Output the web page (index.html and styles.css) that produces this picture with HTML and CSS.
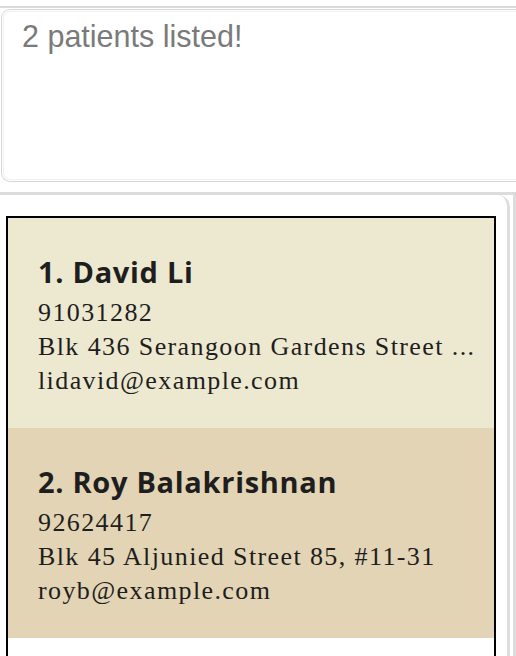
FILE: index.html
```html
<!DOCTYPE html>
<html>
<head>
<meta charset="utf-8">
<link rel="stylesheet" href="styles.css">
</head>
<body>
<div class="app">
  <div class="rule rule-top"></div>
  <div class="result-box">
    <div class="result-inner">2 patients listed!</div>
  </div>
  <div class="rule rule-mid"></div>
  <div class="list-area">
    <div class="list-panel">
      <div class="list">
        <div class="card card-odd">
          <div class="name">1. David Li</div>
          <div class="detail">91031282</div>
          <div class="detail">Blk 436 Serangoon Gardens Street ...</div>
          <div class="detail">lidavid@example.com</div>
        </div>
        <div class="card card-even">
          <div class="name">2. Roy Balakrishnan</div>
          <div class="detail">92624417</div>
          <div class="detail">Blk 45 Aljunied Street 85, #11-31</div>
          <div class="detail">royb@example.com</div>
        </div>
      </div>
    </div>
    <div class="scroll-track"></div>
  </div>
</div>
</body>
</html>
```
FILE: styles.css
```css
html, body {
  margin: 0;
  padding: 0;
  background: #ffffff;
  height: 100%;
  overflow: hidden;
}
.app {
  padding-top: 6px;
  height: 100%;
  box-sizing: border-box;
  display: flex;
  flex-direction: column;
}
.rule {
  background: #d9d9d9;
  flex: none;
}
.rule-top {
  height: 2px;
}
.result-box {
  flex: none;
  margin: 1px 0 0 1px;
  height: 173px;
  box-sizing: border-box;
  border: 1px solid #d6d6d6;
  border-right: none;
  border-radius: 9px 0 0 9px;
  padding: 1px 0 1px 1px;
}
.result-inner {
  height: 100%;
  box-sizing: border-box;
  border: 1px solid #f0f0f0;
  border-right: none;
  border-radius: 7px 0 0 7px;
  padding: 7px 0 0 18px;
  font-family: "Liberation Sans", Arial, sans-serif;
  font-size: 30.5px;
  line-height: 34px;
  color: #7a7a7a;
}
.rule-mid {
  margin-top: 10px;
  height: 3px;
  background: #dcdcdc;
}
.list-area {
  flex: 1;
  display: flex;
  min-height: 0;
}
.list-panel {
  width: 510px;
  box-sizing: border-box;
  border-right: 3px solid #dedede;
  border-top-right-radius: 12px;
  padding: 21px 11px 0 6px;
}
.scroll-track {
  width: 3px;
  margin-left: 3px;
  background: #dcdcdc;
}
.list {
  border: 2px solid #000;
  border-bottom: none;
  height: 100%;
  box-sizing: border-box;
}
.card {
  height: 210px;
  box-sizing: border-box;
  padding: 35px 0 0 30px;
  color: #1e1e1e;
}
.card-odd {
  background: #ede8d0;
}
.card-even {
  background: #e2d4b4;
}
.name {
  font-family: "Open Sans", "Lato", sans-serif;
  font-weight: 700;
  font-size: 29px;
  line-height: 38px;
  letter-spacing: 0.7px;
  margin-bottom: 5px;
}
.detail {
  font-family: "Liberation Serif", "Times New Roman", serif;
  font-size: 26px;
  line-height: 34px;
  letter-spacing: 1.4px;
  white-space: nowrap;
}
```
